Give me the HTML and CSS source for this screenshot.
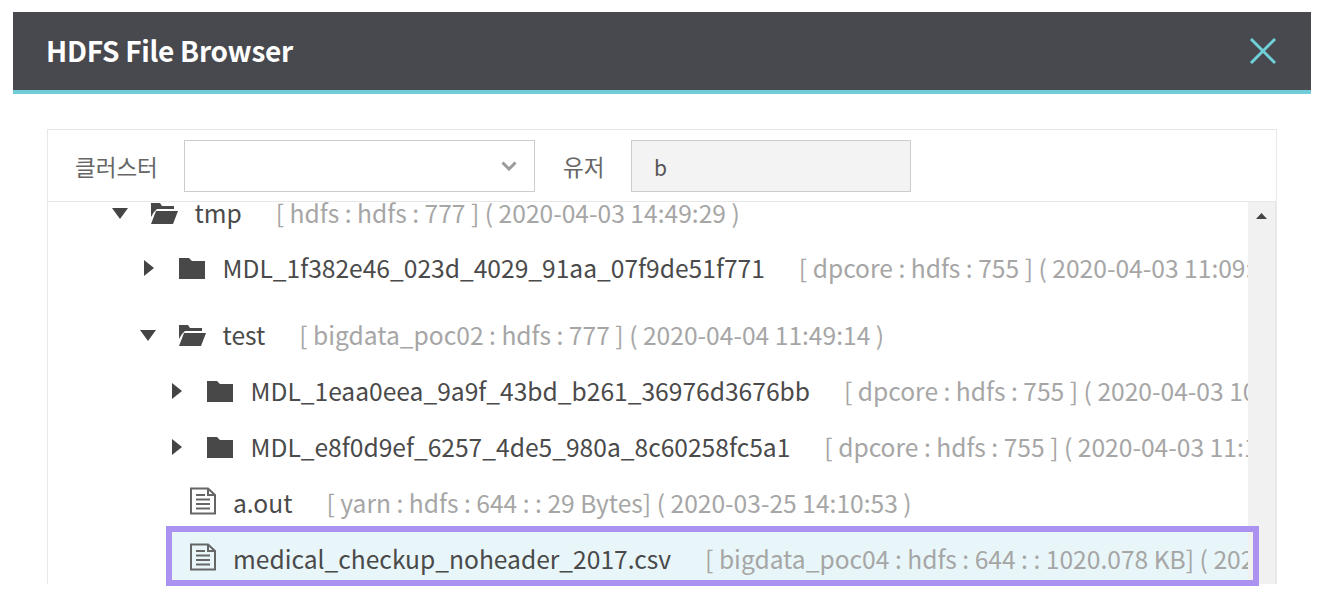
FILE: index.html
```html
<!DOCTYPE html>
<html lang="en">
<head>
  <meta charset="UTF-8">
  <title>HDFS File Browser</title>
  <link rel="stylesheet" href="styles.css">
</head>
<body>

<div id="dialog">
  <div id="header">
    <h2>HDFS File Browser</h2>
    <svg class="close" viewBox="0 0 28 28" width="28" height="28"><path d="M2 2 L26 26 M26 2 L2 26"/></svg>
  </div>

  <div id="panel">
    <div id="toolbar">
      <label class="cluster-label" lang="ko">클러스터</label>
      <div class="select">
        <svg viewBox="0 0 16 10" width="16" height="10"><path d="M1.5 1.5 L8 8 L14.5 1.5"/></svg>
      </div>
      <label class="user-label" lang="ko">유저</label>
      <div class="user-input">b</div>
    </div>

    <div id="browser">
      <div id="tree">
        <ul class="level first">
          <li>
            <div class="row tight">
              <svg class="caret" viewBox="0 0 16 16"><path d="M0 3 H16 L8 14 Z"/></svg>
              <svg class="folder" viewBox="0 0 28 24"><path d="M1 2 H10 L12 5 H24 V8 H7 L4 11 L1 16 Z M6 10 H28 L23 23 H1 Z"/></svg>
              <span class="name">tmp</span>
              <span class="meta">[ hdfs : hdfs : 777 ] ( 2020-04-03 14:49:29 )</span>
            </div>
            <ul class="level">
              <li class="spaced">
                <div class="row">
                  <svg class="caret" viewBox="0 0 16 16"><path d="M4 0 L14 8 L4 16 Z"/></svg>
                  <svg class="folder" viewBox="0 0 28 24"><path d="M1 2 H11 L14 5 H27 V23 H1 Z"/></svg>
                  <span class="name">MDL_1f382e46_023d_4029_91aa_07f9de51f771</span>
                  <span class="meta">[ dpcore : hdfs : 755 ] ( 2020-04-03 11:09:16 )</span>
                </div>
              </li>
              <li>
                <div class="row">
                  <svg class="caret" viewBox="0 0 16 16"><path d="M0 3 H16 L8 14 Z"/></svg>
                  <svg class="folder" viewBox="0 0 28 24"><path d="M1 2 H10 L12 5 H24 V8 H7 L4 11 L1 16 Z M6 10 H28 L23 23 H1 Z"/></svg>
                  <span class="name">test</span>
                  <span class="meta">[ bigdata_poc02 : hdfs : 777 ] ( 2020-04-04 11:49:14 )</span>
                </div>
                <ul class="level">
                  <li>
                    <div class="row">
                      <svg class="caret" viewBox="0 0 16 16"><path d="M4 0 L14 8 L4 16 Z"/></svg>
                      <svg class="folder" viewBox="0 0 28 24"><path d="M1 2 H11 L14 5 H27 V23 H1 Z"/></svg>
                      <span class="name">MDL_1eaa0eea_9a9f_43bd_b261_36976d3676bb</span>
                      <span class="meta">[ dpcore : hdfs : 755 ] ( 2020-04-03 10:21:40 )</span>
                    </div>
                  </li>
                  <li>
                    <div class="row">
                      <svg class="caret" viewBox="0 0 16 16"><path d="M4 0 L14 8 L4 16 Z"/></svg>
                      <svg class="folder" viewBox="0 0 28 24"><path d="M1 2 H11 L14 5 H27 V23 H1 Z"/></svg>
                      <span class="name">MDL_e8f0d9ef_6257_4de5_980a_8c60258fc5a1</span>
                      <span class="meta">[ dpcore : hdfs : 755 ] ( 2020-04-03 11:12:05 )</span>
                    </div>
                  </li>
                  <li>
                    <div class="row file">
                      <svg class="doc" viewBox="0 0 26 28"><path class="sheet" d="M1 1.5 H18 L25 8 V26.5 H1 Z M18 1.5 V8 H25"/><path class="lines" d="M6 8 H15 M6 12.5 H20 M6 17 H20 M6 21.5 H20"/></svg>
                      <span class="name">a.out</span>
                      <span class="meta">[ yarn : hdfs : 644 : : 29 Bytes] ( 2020-03-25 14:10:53 )</span>
                    </div>
                  </li>
                  <li>
                    <div class="row file selected">
                      <svg class="doc" viewBox="0 0 26 28"><path class="sheet" d="M1 1.5 H18 L25 8 V26.5 H1 Z M18 1.5 V8 H25"/><path class="lines" d="M6 8 H15 M6 12.5 H20 M6 17 H20 M6 21.5 H20"/></svg>
                      <span class="name">medical_checkup_noheader_2017.csv</span>
                      <span class="meta">[ bigdata_poc04 : hdfs : 644 : : 1020.078 KB] ( 2020-03-25 14:10:53 )</span>
                    </div>
                  </li>
                </ul>
              </li>
            </ul>
          </li>
        </ul>
      </div>
      <div id="scrollbar">
        <svg viewBox="0 0 11 6" width="11" height="6"><path d="M5.5 0 L11 6 H0 Z"/></svg>
      </div>
    </div>

    <div id="mark"></div>
  </div>
</div>

</body>
</html>
```

FILE: styles.css
```css
html, body {
  height: 100%;
  overflow: hidden;
}

body {
  margin: 0;
  background: #fff;
  font-family: "Noto Sans CJK KR", "Noto Sans", sans-serif;
  font-feature-settings: "calt" 0, "locl" 0;
}

#dialog {
  margin: 12px 19px 0 13px;
}

#header {
  display: flex;
  align-items: center;
  justify-content: space-between;
  height: 78px;
  padding: 0 34px;
  background: #48494e;
  border-bottom: 4px solid #70ccd9;
}

#header h2 {
  margin: 0 0 3px -1px;
  color: #fff;
  font-size: 28px;
  font-weight: 700;
  letter-spacing: -0.28px;
}

.close {
  fill: none;
  stroke: #6fd0d8;
  stroke-width: 3;
}

#panel {
  position: relative;
  height: 455px;
  margin: 35px 34px 0;
  border: 1px solid #e8e8e8;
  border-bottom: none;
  box-sizing: border-box;
}

#toolbar {
  display: flex;
  align-items: center;
  height: 72px;
  padding-top: 1px;
  border-bottom: 1px solid #e8e8e8;
  box-sizing: border-box;
  font-size: 22.5px;
  color: #666;
}

.cluster-label {
  margin-left: 27px;
  width: 109px;
}

.select {
  display: flex;
  align-items: center;
  justify-content: flex-end;
  width: 351px;
  height: 52px;
  padding-right: 17px;
  border: 1px solid #ccc;
  box-sizing: border-box;
}

.select svg {
  fill: none;
  stroke: #9a9a9a;
  stroke-width: 3;
}

.user-label {
  margin-left: 28px;
  width: 68px;
}

.user-input {
  width: 280px;
  height: 52px;
  padding-left: 22px;
  line-height: 52px;
  font-size: 21px;
  background: #f3f3f3;
  border: 1px solid #ccc;
  box-sizing: border-box;
  color: #555;
}

#browser {
  display: flex;
  height: 382px;
}

#tree {
  flex: 1;
  overflow: hidden;
}

#scrollbar {
  display: flex;
  justify-content: center;
  width: 28px;
  padding-top: 11px;
  background: #f1f1f1;
  border-right: 1px solid #e8e8e8;
  box-sizing: border-box;
}

#scrollbar svg {
  fill: #444;
}

ul.level {
  margin: 0;
  padding: 0 0 0 28px;
  list-style: none;
}

ul.first {
  margin-top: -16px;
  padding-left: 64px;
}

.row {
  display: flex;
  align-items: center;
  height: 48px;
  margin-bottom: 8px;
  font-size: 24.6px;
  white-space: nowrap;
}

.row.tight {
  margin-bottom: 7px;
}

li.spaced .row {
  margin-bottom: 19px;
}

.row.selected {
  background: #e8f6f9;
}

.row.file {
  padding-left: 22px;
}

.caret {
  flex: none;
  width: 16px;
  height: 16px;
  margin: 6px 22px 0 0;
  fill: #444;
}

.folder {
  flex: none;
  width: 28px;
  height: 24px;
  margin: 6px 16.5px 0 0;
  fill: #484848;
}

.doc {
  flex: none;
  width: 26px;
  height: 28px;
  margin: 2px 17px 0 0;
  fill: none;
  stroke: #666;
}

.doc .sheet {
  stroke-width: 2;
}

.doc .lines {
  stroke-width: 2;
}

.name {
  flex: none;
  padding-top: 4px;
  color: #4a4a4a;
}

.meta {
  flex: none;
  margin-left: 34px;
  padding-top: 4px;
  color: #a6a6a6;
}

/* box drawn over the selected row */
#mark {
  position: absolute;
  left: 118px;
  top: 396px;
  width: 1093px;
  height: 60px;
  border: 6px solid #ab92f0;
  box-sizing: border-box;
}
```
